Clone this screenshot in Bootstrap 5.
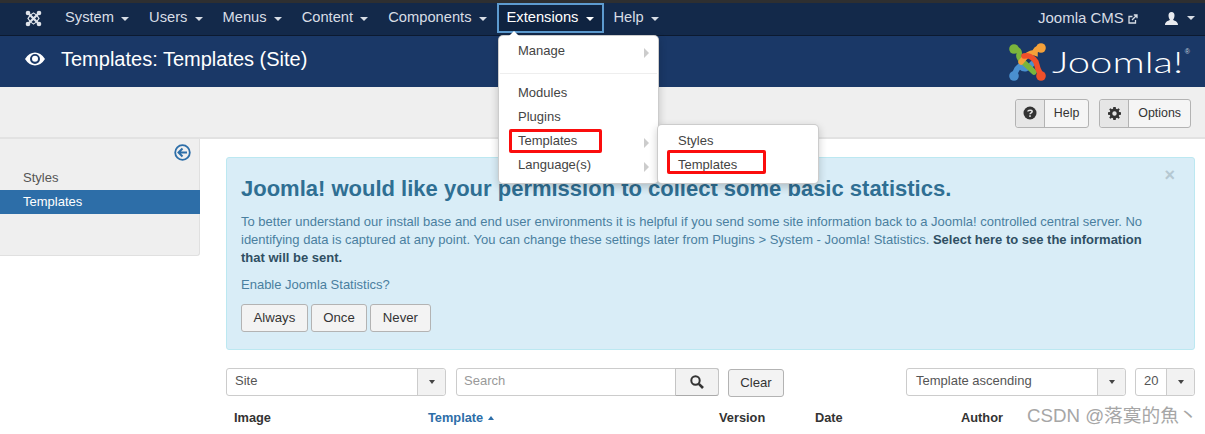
<!DOCTYPE html>
<html lang="en">
<head>
    <meta charset="UTF-8">
    <meta name="viewport" content="width=device-width, initial-scale=1.0">
    <title>Templates: Templates (Site)</title>
    <link href="https://cdn.jsdelivr.net/npm/bootstrap@5.3.0/dist/css/bootstrap.min.css" rel="stylesheet">
    <style>
        html, body { height: 434px; overflow: hidden; }
        body { font-family: "Liberation Sans", Arial, sans-serif; font-size: 14px; line-height: 18px; color: #333; background: #fff; border-top: 3px solid #2e2f31; position: relative; }

        /* top bar */
        .cms-topbar { height: 33px; background: #13294a; border-bottom: 1px solid #0c1a30; padding: 0 10px 2px 25px; }
        .cms-logo-small { width: 17px; height: 17px; margin-right: 13px; }
        .cms-menu { list-style: none; margin: 0; padding: 0; }
        .cms-menu > li > a { display: block; color: #d8dde5; text-decoration: none; font-size: 14.7px; height: 30px; line-height: 25px; padding: 0 8px; border: 2px solid transparent; white-space: nowrap; }
        .cms-menu > li > a.is-open { color: #fff; border-color: #5d9bd0; background: #0f2340; }
        .cms-caret { display: inline-block; width: 0; height: 0; margin-left: 3px; vertical-align: 1px; border-left: 4px solid transparent; border-right: 4px solid transparent; border-top: 4px solid currentColor; }
        .cms-site-link { color: #d8dde5; font-size: 15px; text-decoration: none; }
        .cms-user { color: #d8dde5; margin-left: 27px; }
        .cms-user-caret { margin-left: 9px; }

        /* title bar */
        .cms-titlebar { height: 51px; background: #1a3867; padding: 0 15px 5px 25px; }
        .cms-title { color: #fff; font-size: 20px; font-weight: 400; margin: 0 0 0 16px; line-height: 24px; }
        .cms-brand { margin-top: 5px; }
        .cms-brand-word { display: inline-block; width: 133px; color: #fff; font-family: Lato, "Liberation Sans", sans-serif; font-weight: 300; font-size: 29px; line-height: 36px; margin-left: 6px; white-space: nowrap; transform: scaleX(1.38); transform-origin: left center; }
        .cms-brand-reg { color: #c9d2de; font-size: 7px; line-height: 7px; align-self: flex-start; margin-top: 5px; }

        /* toolbar */
        .cms-toolbar { height: 52px; background: #efefef; border-bottom: 2px solid #e2e2e2; padding-right: 14px; padding-top: 2px; gap: 10px; }
        .tool-btn { display: flex; height: 29px; border: 1px solid #b3b3b3; border-radius: 3px; background: #f5f5f5; font-size: 12.4px; color: #333; }
        .tool-btn-icon { width: 29px; background: #e6e6e6; border-right: 1px solid #b3b3b3; border-radius: 3px 0 0 3px; }
        .tool-btn-text { padding: 0 9px; line-height: 27px; }

        /* sidebar */
        .cms-side { width: 200px; height: 117px; flex: none; background: #efefef; border-right: 1px solid #e0e0e0; border-bottom: 1px solid #e0e0e0; border-bottom-right-radius: 3px; }
        .cms-side-toggle { height: 27px; padding: 5px 8px 0 0; }
        .cms-side a { display: block; height: 24px; line-height: 24px; padding-left: 23px; font-size: 13px; color: #555; text-decoration: none; }
        .cms-side a.active { background: #2d6ea8; color: #fff; width: 200px; }

        /* content */
        .cms-content { padding: 18px 10px 0 26px; flex: 1; min-width: 0; }
        .stats-box { position: relative; height: 193px; background: #d9edf7; border: 1px solid #bce8f1; border-radius: 3px; color: #4a7f9f; padding: 18px 45px 0 14px; font-size: 13px; line-height: 18px; }
        .stats-box h4 { font-size: 22px; line-height: 26px; font-weight: 700; color: #2f6f93; margin: 0 0 11px; white-space: nowrap; }
        .stats-box p { margin: 0 0 9px; }
        .stats-box b { color: #2f4f63; }
        .stats-close { position: absolute; right: 19px; top: 5px; color: #b5c8d2; font-size: 18px; font-weight: 700; line-height: 24px; }
        .stats-btn { height: 28px; padding: 0 11.5px; background: #f3f3f3; border: 1px solid #b3b3b3; border-radius: 3px; color: #333; font-size: 13.2px; line-height: 24px; }
        .stats-actions { gap: 3px; padding-top: 1px; }

        /* filters */
        .filter-row { margin-top: 18px; height: 29px; }
        .pick-box { display: flex; height: 28px; border: 1px solid #ccc; border-radius: 3px; font-size: 13px; color: #555; background: #fff; }
        .pick-box span:first-child { flex: 1; padding: 0 8px; line-height: 24px; }
        .pick-arrow { width: 28px; border-left: 1px solid #ccc; background: #f2f2f2; border-radius: 0 3px 3px 0; color: #444; }
        .pick-arrow .cms-caret { margin: 0; border-left-width: 3.5px; border-right-width: 3.5px; }
        .pick-box span.search-input { flex: 1; padding: 0 7px; line-height: 24px; color: #999; }
        .search-btn { width: 44px; background: #f2f2f2; height: 28px; border: 1px solid #c4c4c4; border-bottom-color: #aaa; margin: -1px -1px 0 0; border-radius: 0 3px 3px 0; }
        .clear-btn { height: 28px; width: 56px; margin: 1px 0 0 9px; background: #f3f3f3; border: 1px solid #b3b3b3; border-radius: 3px; font-size: 13.2px; line-height: 26px; text-align: center; color: #333; }
        .filter-site { width: 220px; }
        .filter-search { width: 263px; margin-left: 10px; }
        .filter-order { width: 220px; }
        .pick-box.filter-order span:first-child { padding-left: 9px; }
        .filter-limit { width: 60px; margin-left: 9px; }

        /* table head */
        .list-head { margin-top: 12px; font-size: 12.8px; font-weight: 700; color: #333; height: 18px; }
        .list-head span { flex: none; }
        .list-head a { color: #2d6ea8; text-decoration: none; }
        .col-image { width: 202px; padding-left: 8px; }
        .col-template { width: 291px; }
        .col-version { width: 96px; }
        .col-date { width: 146px; }
        .caret-up { display: inline-block; width: 0; height: 0; margin-left: 1px; vertical-align: 2px; border-left: 3.5px solid transparent; border-right: 3.5px solid transparent; border-bottom: 4px solid currentColor; }

        /* dropdown menus */
        .ext-menu { position: absolute; background: #fff; border: 1px solid rgba(0,0,0,.2); border-radius: 5px; box-shadow: 0 3px 8px rgba(0,0,0,.2); font-size: 13px; color: #444; z-index: 10; }
        .ext-menu div.ext-item { position: relative; height: 24px; line-height: 24px; padding-left: 19px; }
        .ext-main { left: 498px; top: 32px; width: 161px; height: 149px; padding-top: 3px; }
        .ext-main::before { content: ""; position: absolute; left: 10px; top: -5px; border-left: 5px solid transparent; border-right: 5px solid transparent; border-bottom: 5px solid #fff; }
        .ext-sub { left: 657px; top: 121px; width: 162px; height: 60px; padding-top: 4px; }
        .ext-sub div.ext-item { padding-left: 20px; }
        .ext-rule { height: 1px; background: #eee; margin: 10px 1px 7px; }
        .ext-more { position: absolute; right: 9px; top: 9px; border-left: 5px solid #ccc; border-top: 5px solid transparent; border-bottom: 5px solid transparent; }
        .red-mark { position: absolute; border: 3px solid #fb0d0d; border-radius: 2px; z-index: 20; }
        .mark-one { left: 509px; top: 126px; width: 93px; height: 24px; }
        .mark-two { left: 667px; top: 147px; width: 99px; height: 24px; }
        .csdn-mark { position: absolute; left: 1027px; top: 401px; font-size: 18.7px; line-height: 24px; color: #a6a6a6; white-space: nowrap; font-family: "Liberation Sans", "Noto Sans CJK SC", sans-serif; z-index: 5; }
    </style>
</head>
<body>
    <nav class="cms-topbar d-flex align-items-center">
        <svg class="cms-logo-small" viewBox="0 0 17 17" fill="none" stroke="#dfe3ea">
            <path d="M3.500 3.500 13.500 13.500M13.500 3.500 3.500 13.500" stroke-width="2.200"/>
            <path d="M3 8.500C5 5 6 4 8.500 3 11 4 12 5 14 8.500 12 12 11 13 8.500 14 6 13 5 12 3 8.500Z" stroke-width="1.300"/>
            <g fill="#dfe3ea" stroke="none"><circle cx="3" cy="3" r="2.300"/><circle cx="14" cy="3" r="2.300"/><circle cx="3" cy="14" r="2.300"/><circle cx="14" cy="14" r="2.300"/></g>
        </svg>
        <ul class="cms-menu d-flex">
            <li><a href="#">System <i class="cms-caret"></i></a></li>
            <li><a href="#">Users <i class="cms-caret"></i></a></li>
            <li><a href="#">Menus <i class="cms-caret"></i></a></li>
            <li><a href="#">Content <i class="cms-caret"></i></a></li>
            <li><a href="#">Components <i class="cms-caret"></i></a></li>
            <li><a href="#" class="is-open">Extensions <i class="cms-caret"></i></a></li>
            <li><a href="#">Help <i class="cms-caret"></i></a></li>
        </ul>
        <div class="ms-auto d-flex align-items-center">
            <a class="cms-site-link" href="#">Joomla CMS
                <svg width="10" height="10" viewBox="0 0 10 10" fill="none" stroke="#d8dde5" stroke-width="1.300"><path d="M7.500 6v3H1V2.500h3.500M4 6l5-5M5.800 1H9v3.200"/></svg>
            </a>
            <span class="cms-user d-flex align-items-center">
                <svg width="13" height="13" viewBox="0 0 13 13" fill="#e8ebf0"><path d="M6.500 0C8.500 0 9.500 1.500 9.500 3.500S8.500 7 8 8C10 9 13 9.500 13 13H0C0 9.500 3 9 5 8 4.500 7 3.500 5.500 3.500 3.500S4.500 0 6.500 0Z"/></svg>
                <i class="cms-caret cms-user-caret"></i>
            </span>
        </div>
    </nav>

    <header class="cms-titlebar d-flex align-items-center">
        <svg width="20" height="14" viewBox="0 0 20 14"><path fill="#fff" fill-rule="evenodd" d="M0 7C3 2.500 6.300.5 10 .5S17 2.500 20 7c-3 4.500-6.300 6.500-10 6.500S3 11.500 0 7Zm10-5a5 5 0 1 0 0 10 5 5 0 0 0 0-10Z"/><circle cx="10" cy="6.800" r="3" fill="#fff"/></svg>
        <h1 class="cms-title">Templates: Templates (Site)</h1>
        <div class="cms-brand ms-auto d-flex align-items-center">
            <svg width="37" height="38" viewBox="0 0 37 38" fill="none" stroke-width="5.500" stroke-linecap="round">
                <path d="M12 22 8 26 5 32" stroke="#4a90d0"/>
                <path d="M12 24C15 27 19 26 23 21" stroke="#4a90d0"/>
                <path d="M5 6C9 6 11 8 10 12 9 16 14 18 25 29" stroke="#7ab43c"/>
                <path d="M32 5C28 5 26 7 26 10 23 9 19 10 12 19" stroke="#f5a13a"/>
                <path d="M15 13C19 12 24 14 27 19 28 24 29 27 32 32" stroke="#f0502a"/>
                <circle cx="5" cy="6" r="4.800" fill="#7ab43c" stroke="none"/>
                <circle cx="32" cy="5" r="4.800" fill="#f5a13a" stroke="none"/>
                <circle cx="5" cy="33" r="4.800" fill="#4a90d0" stroke="none"/>
                <circle cx="32" cy="33" r="4.800" fill="#f0502a" stroke="none"/>
            </svg>
            <span class="cms-brand-word">Joomla!</span>
            <span class="cms-brand-reg">®</span>
        </div>
    </header>

    <div class="cms-toolbar d-flex justify-content-end align-items-center">
        <div class="tool-btn">
            <span class="tool-btn-icon d-flex align-items-center justify-content-center">
                <svg width="14" height="14" viewBox="0 0 14 14"><circle cx="7" cy="7" r="6.500" fill="#333"/><path d="M4.800 5.500C5 3.800 9.200 3.600 9.200 5.600 9.200 7 7 6.800 7 8.300" fill="none" stroke="#e6e6e6" stroke-width="1.500"/><rect x="6.200" y="9.300" width="1.600" height="1.600" fill="#e6e6e6"/></svg>
            </span>
            <span class="tool-btn-text">Help</span>
        </div>
        <div class="tool-btn">
            <span class="tool-btn-icon d-flex align-items-center justify-content-center">
                <svg width="13" height="13" viewBox="0 0 13 13"><path fill="#333" fill-rule="evenodd" d="M5.300 0h2.400l.3 1.800 1.100.5L10.600 1.200l1.200 1.200-1.100 1.500.5 1.100 1.800.3v2.400l-1.800.3-.5 1.100 1.100 1.500-1.200 1.200-1.500-1.100-1.100.5-.3 1.800H5.300L5 11.200l-1.100-.5-1.500 1.100-1.200-1.200 1.100-1.500-.5-1.100L0 7.700V5.300L1.800 5l.5-1.100L1.200 2.400l1.200-1.200 1.500 1.100L5 1.800ZM6.500 4.300a2.200 2.200 0 1 0 0 4.400 2.200 2.200 0 0 0 0-4.400Z"/></svg>
            </span>
            <span class="tool-btn-text">Options</span>
        </div>
    </div>

    <div class="d-flex">
        <aside class="cms-side">
            <div class="cms-side-toggle d-flex justify-content-end">
                <svg width="17" height="17" viewBox="0 0 17 17" fill="none" stroke="#2d6ea8"><circle cx="8.500" cy="8.500" r="7.300" stroke-width="1.800"/><path d="M8.500 4.500 4.500 8.500l4 4M4.500 8.500H13" stroke-width="2"/></svg>
            </div>
            <a href="#">Styles</a>
            <a href="#" class="active">Templates</a>
        </aside>
        <main class="cms-content">
            <div class="stats-box">
                <span class="stats-close">×</span>
                <h4>Joomla! would like your permission to collect some basic statistics.</h4>
                <p>To better understand our install base and end user environments it is helpful if you send some site information back to a Joomla! controlled central server. No identifying data is captured at any point. You can change these settings later from Plugins &gt; System - Joomla! Statistics. <b>Select here to see the information that will be sent.</b></p>
                <p>Enable Joomla Statistics?</p>
                <div class="stats-actions d-flex">
                    <button class="stats-btn" type="button">Always</button>
                    <button class="stats-btn" type="button">Once</button>
                    <button class="stats-btn" type="button">Never</button>
                </div>
            </div>

            <div class="filter-row d-flex">
                <div class="pick-box filter-site"><span>Site</span><span class="pick-arrow d-flex align-items-center justify-content-center"><i class="cms-caret"></i></span></div>
                <div class="pick-box filter-search"><span class="search-input">Search</span>
                    <span class="search-btn d-flex align-items-center justify-content-center">
                        <svg width="14" height="14" viewBox="0 0 14 14" fill="none" stroke="#333"><circle cx="5.500" cy="5.500" r="4.200" stroke-width="2"/><path d="M8.800 8.800 13 13" stroke-width="2.600"/></svg>
                    </span>
                </div>
                <div class="clear-btn">Clear</div>
                <div class="pick-box filter-order ms-auto"><span>Template ascending</span><span class="pick-arrow d-flex align-items-center justify-content-center"><i class="cms-caret"></i></span></div>
                <div class="pick-box filter-limit"><span>20</span><span class="pick-arrow d-flex align-items-center justify-content-center"><i class="cms-caret"></i></span></div>
            </div>

            <div class="list-head d-flex">
                <span class="col-image">Image</span>
                <span class="col-template"><a href="#">Template <i class="caret-up"></i></a></span>
                <span class="col-version">Version</span>
                <span class="col-date">Date</span>
                <span>Author</span>
            </div>
        </main>
    </div>

    <div class="ext-menu ext-main">
        <div class="ext-item">Manage<i class="ext-more"></i></div>
        <div class="ext-rule"></div>
        <div class="ext-item">Modules</div>
        <div class="ext-item">Plugins</div>
        <div class="ext-item">Templates<i class="ext-more"></i></div>
        <div class="ext-item">Language(s)<i class="ext-more"></i></div>
    </div>
    <div class="ext-menu ext-sub">
        <div class="ext-item">Styles</div>
        <div class="ext-item">Templates</div>
    </div>
    <i class="red-mark mark-one"></i>
    <i class="red-mark mark-two"></i>
    <div class="csdn-mark">CSDN @落寞的魚丶</div>

    <script src="https://cdn.jsdelivr.net/npm/bootstrap@5.3.0/dist/js/bootstrap.bundle.min.js"></script>
</body>
</html>
